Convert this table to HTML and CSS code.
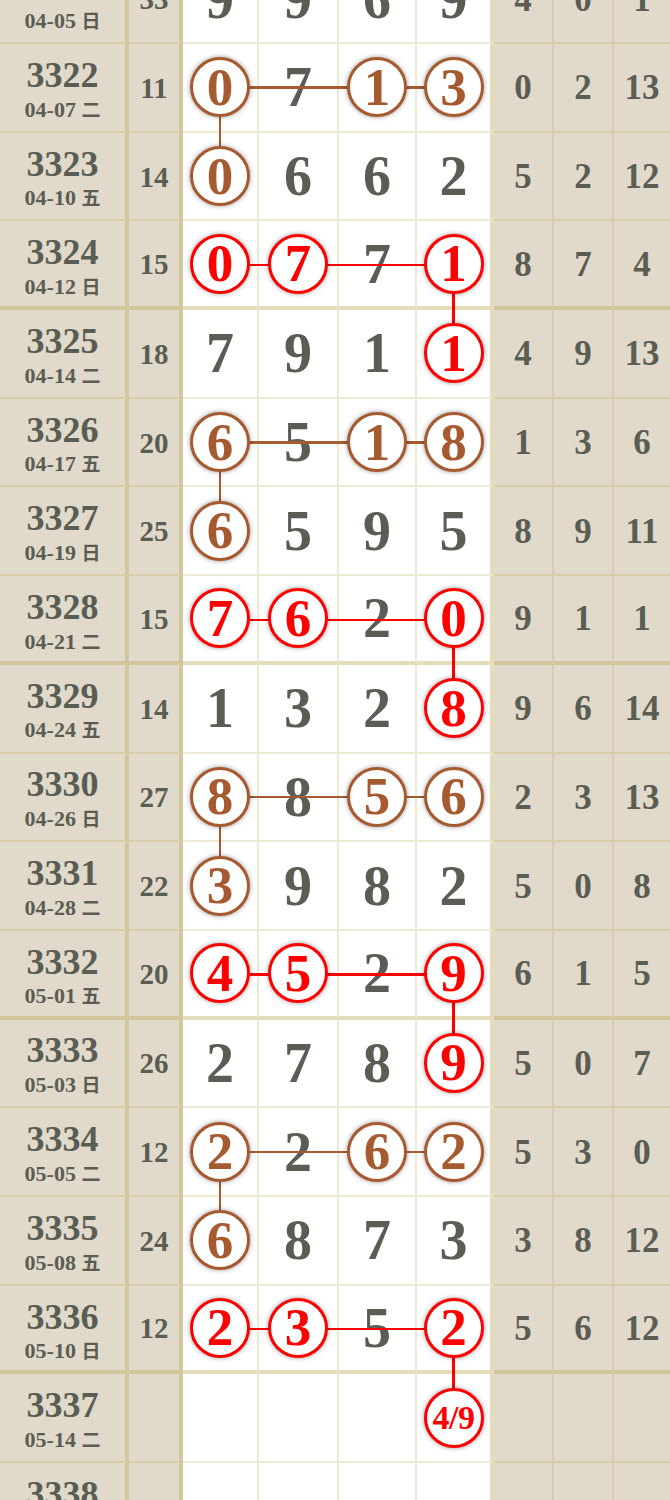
FILE: index.html
```html
<!DOCTYPE html>
<html lang="zh">
<head>
<meta charset="utf-8">
<title>走势图</title>
<link rel="stylesheet" href="styles.css">
</head>
<body>
<div class="board">

  <div class="row">
    <div class="cell issue"><div class="no">3321</div><div class="date">04-05 <span class="wk">日</span></div></div>
    <div class="cell sum">33</div>
    <div class="cell num">9</div><div class="cell num">9</div><div class="cell num">6</div><div class="cell num last">9</div>
    <div class="cell side">4</div><div class="cell side">0</div><div class="cell side">1</div>
  </div>

  <div class="row">
    <i class="hline brown"></i>
    <div class="cell issue"><div class="no">3322</div><div class="date">04-07 <span class="wk">二</span></div></div>
    <div class="cell sum">11</div>
    <div class="cell num"><span class="ball brown">0</span><i class="vline brown"></i></div><div class="cell num">7</div><div class="cell num"><span class="ball brown">1</span></div><div class="cell num last"><span class="ball brown">3</span></div>
    <div class="cell side">0</div><div class="cell side">2</div><div class="cell side">13</div>
  </div>

  <div class="row">
    <div class="cell issue"><div class="no">3323</div><div class="date">04-10 <span class="wk">五</span></div></div>
    <div class="cell sum">14</div>
    <div class="cell num"><span class="ball brown">0</span></div><div class="cell num">6</div><div class="cell num">6</div><div class="cell num last">2</div>
    <div class="cell side">5</div><div class="cell side">2</div><div class="cell side">12</div>
  </div>

  <div class="row grp">
    <i class="hline red"></i>
    <div class="cell issue"><div class="no">3324</div><div class="date">04-12 <span class="wk">日</span></div></div>
    <div class="cell sum">15</div>
    <div class="cell num"><span class="ball red">0</span></div><div class="cell num"><span class="ball red">7</span></div><div class="cell num">7</div><div class="cell num last"><span class="ball red">1</span><i class="vline red"></i></div>
    <div class="cell side">8</div><div class="cell side">7</div><div class="cell side">4</div>
  </div>

  <div class="row">
    <div class="cell issue"><div class="no">3325</div><div class="date">04-14 <span class="wk">二</span></div></div>
    <div class="cell sum">18</div>
    <div class="cell num">7</div><div class="cell num">9</div><div class="cell num">1</div><div class="cell num last"><span class="ball red">1</span></div>
    <div class="cell side">4</div><div class="cell side">9</div><div class="cell side">13</div>
  </div>

  <div class="row">
    <i class="hline brown"></i>
    <div class="cell issue"><div class="no">3326</div><div class="date">04-17 <span class="wk">五</span></div></div>
    <div class="cell sum">20</div>
    <div class="cell num"><span class="ball brown">6</span><i class="vline brown"></i></div><div class="cell num">5</div><div class="cell num"><span class="ball brown">1</span></div><div class="cell num last"><span class="ball brown">8</span></div>
    <div class="cell side">1</div><div class="cell side">3</div><div class="cell side">6</div>
  </div>

  <div class="row">
    <div class="cell issue"><div class="no">3327</div><div class="date">04-19 <span class="wk">日</span></div></div>
    <div class="cell sum">25</div>
    <div class="cell num"><span class="ball brown">6</span></div><div class="cell num">5</div><div class="cell num">9</div><div class="cell num last">5</div>
    <div class="cell side">8</div><div class="cell side">9</div><div class="cell side">11</div>
  </div>

  <div class="row grp">
    <i class="hline red"></i>
    <div class="cell issue"><div class="no">3328</div><div class="date">04-21 <span class="wk">二</span></div></div>
    <div class="cell sum">15</div>
    <div class="cell num"><span class="ball red">7</span></div><div class="cell num"><span class="ball red">6</span></div><div class="cell num">2</div><div class="cell num last"><span class="ball red">0</span><i class="vline red"></i></div>
    <div class="cell side">9</div><div class="cell side">1</div><div class="cell side">1</div>
  </div>

  <div class="row">
    <div class="cell issue"><div class="no">3329</div><div class="date">04-24 <span class="wk">五</span></div></div>
    <div class="cell sum">14</div>
    <div class="cell num">1</div><div class="cell num">3</div><div class="cell num">2</div><div class="cell num last"><span class="ball red">8</span></div>
    <div class="cell side">9</div><div class="cell side">6</div><div class="cell side">14</div>
  </div>

  <div class="row">
    <i class="hline brown"></i>
    <div class="cell issue"><div class="no">3330</div><div class="date">04-26 <span class="wk">日</span></div></div>
    <div class="cell sum">27</div>
    <div class="cell num"><span class="ball brown">8</span><i class="vline brown"></i></div><div class="cell num">8</div><div class="cell num"><span class="ball brown">5</span></div><div class="cell num last"><span class="ball brown">6</span></div>
    <div class="cell side">2</div><div class="cell side">3</div><div class="cell side">13</div>
  </div>

  <div class="row">
    <div class="cell issue"><div class="no">3331</div><div class="date">04-28 <span class="wk">二</span></div></div>
    <div class="cell sum">22</div>
    <div class="cell num"><span class="ball brown">3</span></div><div class="cell num">9</div><div class="cell num">8</div><div class="cell num last">2</div>
    <div class="cell side">5</div><div class="cell side">0</div><div class="cell side">8</div>
  </div>

  <div class="row grp">
    <i class="hline red"></i>
    <div class="cell issue"><div class="no">3332</div><div class="date">05-01 <span class="wk">五</span></div></div>
    <div class="cell sum">20</div>
    <div class="cell num"><span class="ball red">4</span></div><div class="cell num"><span class="ball red">5</span></div><div class="cell num">2</div><div class="cell num last"><span class="ball red">9</span><i class="vline red"></i></div>
    <div class="cell side">6</div><div class="cell side">1</div><div class="cell side">5</div>
  </div>

  <div class="row">
    <div class="cell issue"><div class="no">3333</div><div class="date">05-03 <span class="wk">日</span></div></div>
    <div class="cell sum">26</div>
    <div class="cell num">2</div><div class="cell num">7</div><div class="cell num">8</div><div class="cell num last"><span class="ball red">9</span></div>
    <div class="cell side">5</div><div class="cell side">0</div><div class="cell side">7</div>
  </div>

  <div class="row">
    <i class="hline brown"></i>
    <div class="cell issue"><div class="no">3334</div><div class="date">05-05 <span class="wk">二</span></div></div>
    <div class="cell sum">12</div>
    <div class="cell num"><span class="ball brown">2</span><i class="vline brown"></i></div><div class="cell num">2</div><div class="cell num"><span class="ball brown">6</span></div><div class="cell num last"><span class="ball brown">2</span></div>
    <div class="cell side">5</div><div class="cell side">3</div><div class="cell side">0</div>
  </div>

  <div class="row">
    <div class="cell issue"><div class="no">3335</div><div class="date">05-08 <span class="wk">五</span></div></div>
    <div class="cell sum">24</div>
    <div class="cell num"><span class="ball brown">6</span></div><div class="cell num">8</div><div class="cell num">7</div><div class="cell num last">3</div>
    <div class="cell side">3</div><div class="cell side">8</div><div class="cell side">12</div>
  </div>

  <div class="row grp">
    <i class="hline red"></i>
    <div class="cell issue"><div class="no">3336</div><div class="date">05-10 <span class="wk">日</span></div></div>
    <div class="cell sum">12</div>
    <div class="cell num"><span class="ball red">2</span></div><div class="cell num"><span class="ball red">3</span></div><div class="cell num">5</div><div class="cell num last"><span class="ball red">2</span><i class="vline red"></i></div>
    <div class="cell side">5</div><div class="cell side">6</div><div class="cell side">12</div>
  </div>

  <div class="row">
    <div class="cell issue"><div class="no">3337</div><div class="date">05-14 <span class="wk">二</span></div></div>
    <div class="cell sum"></div>
    <div class="cell num"></div><div class="cell num"></div><div class="cell num"></div><div class="cell num last"><span class="ball red small">4/9</span></div>
    <div class="cell side"></div><div class="cell side"></div><div class="cell side"></div>
  </div>

  <div class="row">
    <div class="cell issue"><div class="no">3338</div><div class="date">05-17 <span class="wk">五</span></div></div>
    <div class="cell sum"></div>
    <div class="cell num"></div><div class="cell num"></div><div class="cell num"></div><div class="cell num last"></div>
    <div class="cell side"></div><div class="cell side"></div><div class="cell side"></div>
  </div>

</div>
</body>
</html>
```
FILE: styles.css
```css
:root {
  --thin: rgba(190, 175, 95, 0.28);
  --thick: rgba(190, 175, 95, 0.42);
  --ink: #5a5d54;
  --beige: #e1d9c9;
  --brown: #a65a30;
  --red: #ff0000;
}

html, body {
  margin: 0;
  padding: 0;
  background: #ffffff;
}

body {
  font-family: "Liberation Serif", "Times New Roman", serif;
  color: var(--ink);
  overflow: hidden;
}

.board {
  width: 670px;
  margin-top: -44.7px;
}

.row {
  display: grid;
  grid-template-columns: 129px 54px 76px 80px 78px 77px 60px 60px 56px;
  height: 88.7px;
  position: relative;
}

.cell {
  box-sizing: border-box;
  position: relative;
  display: flex;
  align-items: center;
  justify-content: center;
  font-weight: 700;
  line-height: 1;
  border-right: 2px solid var(--thin);
  border-bottom: 2px solid var(--thin);
}

.row.grp .cell {
  border-bottom: 4px solid var(--thick);
}

.issue,
.sum,
.side {
  background: var(--beige);
}

.issue,
.sum,
.num.last {
  border-right: 4px solid var(--thick);
}

.side:last-child {
  border-right: 0;
}

/* issue number + date */
.issue {
  flex-direction: column;
  justify-content: flex-start;
  padding-top: 12.9px;
}

.no {
  font-size: 36px;
  line-height: 36px;
  height: 36px;
}

.date {
  font-size: 22px;
  line-height: 22px;
  height: 22px;
  margin-top: 4.7px;
  white-space: nowrap;
}

.wk {
  font-family: "Noto Sans CJK SC", sans-serif;
  font-size: 19px;
  font-weight: 700;
  line-height: 22px;
}

.sum {
  font-size: 29px;
  padding-top: 2px;
}

.side {
  font-size: 35px;
  padding-top: 1px;
}

.num {
  background: #ffffff;
  font-size: 56px;
}

/* circled numbers */
.ball {
  box-sizing: border-box;
  position: relative;
  z-index: 2;
  width: 60px;
  height: 60px;
  border-radius: 50%;
  border: 3px solid currentColor;
  background: #ffffff;
  display: flex;
  align-items: center;
  justify-content: center;
  font-size: 53px;
  line-height: 1;
  box-shadow: 0 0 5px rgba(0, 0, 0, 0.4);
}

.ball.small {
  font-size: 34px;
  letter-spacing: -0.5px;
}

.brown { color: var(--brown); }
.red { color: var(--red); }

/* connector lines */
.hline {
  position: absolute;
  z-index: 1;
  left: 220px;
  width: 234px;
  top: 42.4px;
  height: 2.4px;
  background: currentColor;
}

.vline {
  position: absolute;
  z-index: 1;
  left: calc(50% - 1.2px);
  top: 50%;
  width: 2.4px;
  height: 88.7px;
  background: currentColor;
}
```
